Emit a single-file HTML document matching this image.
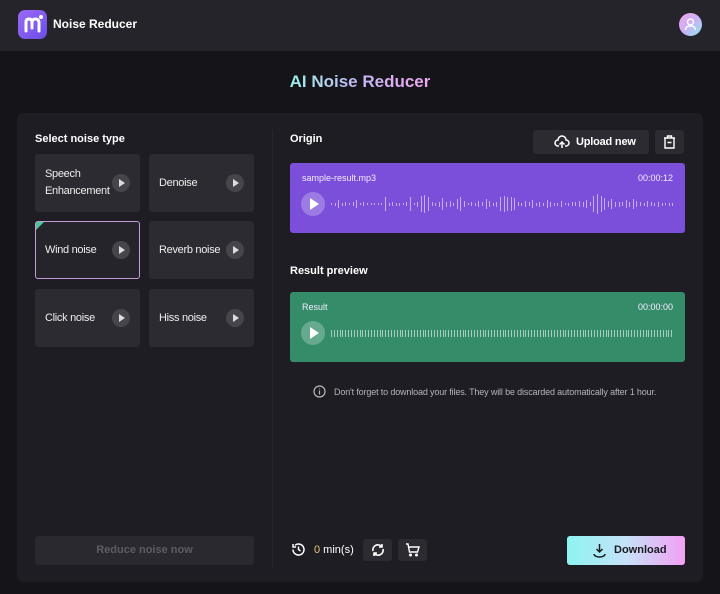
<!DOCTYPE html>
<html><head><meta charset="utf-8"><style>
*{box-sizing:border-box;margin:0;padding:0}
body{width:720px;height:594px;background:#151419;font-family:"Liberation Sans",sans-serif;color:#fff;position:relative;overflow:hidden}
.hdr{position:absolute;left:0;top:0;width:720px;height:51px;background:#25242b}
.logo{position:absolute;left:18px;top:10px;width:29px;height:29px;border-radius:7px;background:linear-gradient(135deg,#9b6af7,#6a4ee6)}
.brand{position:absolute;left:53px;top:17px;font-size:12px;font-weight:bold}
.av{position:absolute;left:679px;top:13px;width:23px;height:23px;border-radius:50%;background:linear-gradient(135deg,#f3a4e8,#c9b2f5 50%,#8ee6f1)}
h1{position:absolute;top:72px;left:0;width:720px;text-align:center;font-size:17px;font-weight:bold}
h1 span{background:linear-gradient(90deg,#9ef0e8,#c5b6f5 50%,#f0a6f0);-webkit-background-clip:text;color:transparent}
.panel{position:absolute;left:17px;top:113px;width:686px;height:469px;background:#1e1d23;border-radius:6px}
.div{position:absolute;left:272px;top:130px;width:1px;height:438px;background:#26252b}
.lbl{position:absolute;font-size:11px;font-weight:bold}
.card{position:absolute;width:105px;height:58px;background:#2c2b31;border-radius:3px;font-size:11px;letter-spacing:-0.3px;color:#eee;line-height:17px;padding-left:10px;display:flex;align-items:center}
.card .p{position:absolute;right:10px;top:20px;width:18px;height:18px;border-radius:50%;background:#46454b}
.card .p:after{content:"";position:absolute;left:7px;top:5px;border-left:6px solid #ddd;border-top:4px solid transparent;border-bottom:4px solid transparent}
.sel{border:1px solid #c59ad8;background:#25242b}
.btn{position:absolute;background:#2c2b31;border-radius:3px}
.wave{position:absolute;border-radius:3px}
.wave .t{position:absolute;top:10px;font-size:9px;color:#f2ecff}
.pl{position:absolute;left:11px;top:29px;width:24px;height:24px;border-radius:50%;background:rgba(255,255,255,.25)}
.pl:after{content:"";position:absolute;left:9px;top:6px;border-left:9px solid #fff;border-top:6px solid transparent;border-bottom:6px solid transparent}
.bars{position:absolute;left:41px;right:11px;top:30px;height:22px;display:flex;align-items:center;justify-content:space-between}
.bars i{display:block;width:1px;background:rgba(255,255,255,.55)}
</style></head><body>
<div class="hdr">
<div class="logo"><svg width="29" height="29" viewBox="0 0 29 29"><path d="M8 21V12q0-3 3-3t3 3v6M14 13q0-4 3.5-4t3.5 4v8" fill="none" stroke="#fff" stroke-width="3" stroke-linecap="round"/><circle cx="23" cy="7" r="2" fill="#fff"/></svg></div>
<div class="brand">Noise Reducer</div>
<div class="av"><svg width="23" height="23" viewBox="0 0 23 23"><circle cx="11.5" cy="9" r="3" fill="none" stroke="#fff" stroke-width="1.3"/><path d="M6.5 17q0-4 5-4t5 4" fill="none" stroke="#fff" stroke-width="1.3"/></svg></div>
</div>
<h1><span>AI Noise Reducer</span></h1>
<div class="panel"></div>
<div class="div"></div>
<div class="lbl" style="left:35px;top:133px">Select noise type</div>
<div class="card" style="left:35px;top:154px">Speech<br>Enhancement<div class="p"></div></div>
<div class="card" style="left:149px;top:154px">Denoise<div class="p"></div></div>
<div class="card sel" style="left:35px;top:221px;padding-left:9px">Wind noise<div class="p" style="right:9px;top:19px"></div><div style="position:absolute;left:0;top:0;border-top:8px solid #4fc59b;border-right:8px solid transparent"></div></div>
<div class="card" style="left:149px;top:221px">Reverb noise<div class="p"></div></div>
<div class="card" style="left:35px;top:289px">Click noise<div class="p"></div></div>
<div class="card" style="left:149px;top:289px">Hiss noise<div class="p"></div></div>
<div class="btn" style="left:35px;top:536px;width:219px;height:29px;background:#2a2930;color:#5d5c62;font-size:11px;font-weight:bold;text-align:center;line-height:29px">Reduce noise now</div>

<div class="lbl" style="left:290px;top:133px">Origin</div>
<div class="btn" style="left:533px;top:130px;width:116px;height:24px;font-size:11px;font-weight:bold;line-height:24px;padding-left:43px;letter-spacing:-0.2px">Upload new
<svg style="position:absolute;left:21px;top:4px" width="16" height="16" viewBox="0 0 16 16" fill="none" stroke="#fff" stroke-width="1.5"><path d="M5 12H4a3 3 0 0 1 0-6 4 4 0 0 1 8 0 3 3 0 0 1 0 6h-1M8 14V8M5.5 10.5 8 8l2.5 2.5"/></svg></div>
<div class="btn" style="left:655px;top:130px;width:29px;height:24px"><svg style="position:absolute;left:7px;top:4px" width="15" height="16" viewBox="0 0 15 16" fill="none" stroke="#fff" stroke-width="1.4"><path d="M2 4h11M5.5 4V2h4v2M3 4v10h9V4M5.5 8.5h4"/></svg></div>
<div class="wave" style="left:290px;top:163px;width:395px;height:70px;background:#7b4fda"><div class="t" style="left:12px">sample-result.mp3</div><div class="t" style="right:12px">00:00:12</div><div class="pl"></div><div class="bars" id="b1"></div></div>
<div class="lbl" style="left:290px;top:265px">Result preview</div>
<div class="wave" style="left:290px;top:292px;width:395px;height:70px;background:#358c69"><div class="t" style="left:12px">Result</div><div class="t" style="right:12px">00:00:00</div><div class="pl"></div><div class="bars" id="b2"></div></div>
<div style="position:absolute;left:313px;top:387px;font-size:9px;color:#b5b4ba;letter-spacing:-0.15px;white-space:nowrap"><svg style="position:absolute;left:0;top:-2px" width="13" height="13" viewBox="0 0 13 13" fill="none" stroke="#bbb" stroke-width="1.2"><circle cx="6.5" cy="6.5" r="5.5"/><path d="M6.5 5.5v4M6.5 3.5v.8"/></svg><span style="margin-left:21px">Don't forget to download your files. They will be discarded automatically after 1 hour.</span></div>

<svg style="position:absolute;left:291px;top:542px" width="15" height="15" viewBox="0 0 15 15" fill="none" stroke="#fff" stroke-width="1.5"><path d="M2 7.5a5.5 5.5 0 1 0 2-4.2M2 2v3h3M7.5 4.5v3l2 1.5"/></svg>
<div style="position:absolute;left:314px;top:544px;font-size:11px"><span style="color:#e6c77b">0</span> min(s)</div>
<div class="btn" style="left:363px;top:539px;width:29px;height:22px"><svg style="position:absolute;left:7px;top:3px" width="16" height="16" viewBox="0 0 16 16" fill="none" stroke="#fff" stroke-width="1.6"><path d="M3 9a5 5 0 0 1 9-4M13 7a5 5 0 0 1-9 4M12 2v3H9M4 14v-3h3"/></svg></div>
<div class="btn" style="left:398px;top:539px;width:29px;height:22px"><svg style="position:absolute;left:7px;top:3px" width="16" height="16" viewBox="0 0 16 16" fill="none" stroke="#fff" stroke-width="1.4"><path d="M1 2h2l1.5 8h8L14 5H4"/><circle cx="5.5" cy="13" r=".8"/><circle cx="11.5" cy="13" r=".8"/></svg></div>
<div style="position:absolute;left:567px;top:536px;width:118px;height:29px;border-radius:3px;background:linear-gradient(90deg,#8df4f0,#c5e2f8 50%,#f3a0f2);color:#1a1a22;font-size:11px;font-weight:bold;line-height:29px;padding-left:47px">Download
<svg style="position:absolute;left:25px;top:7px" width="15" height="15" viewBox="0 0 15 15" fill="none" stroke="#1a1a22" stroke-width="1.5"><path d="M7.5 1v8M4.5 6l3 3 3-3M2 11a5.5 3 0 0 0 11 0"/></svg></div>
<script>
var h=[2,3,8,3,4,2,4,8,2,4,2,2,2,2,2,14,3,4,3,3,2,4,14,2,5,16,18,14,4,3,5,12,5,6,3,10,14,6,2,4,3,6,4,10,6,3,5,14,16,14,14,12,4,3,6,4,8,3,5,3,8,5,3,3,6,2,3,4,4,6,5,8,4,16,20,16,12,6,10,5,5,4,8,5,10,6,4,3,6,4,3,5,3,2,3,3];
var b=document.getElementById('b1');h.forEach(function(v){var i=document.createElement('i');i.style.height=v+'px';b.appendChild(i)});
var c=document.getElementById('b2');for(var k=0;k<120;k++){var i=document.createElement('i');i.style.height='7px';c.appendChild(i)}
</script>
</body></html>
